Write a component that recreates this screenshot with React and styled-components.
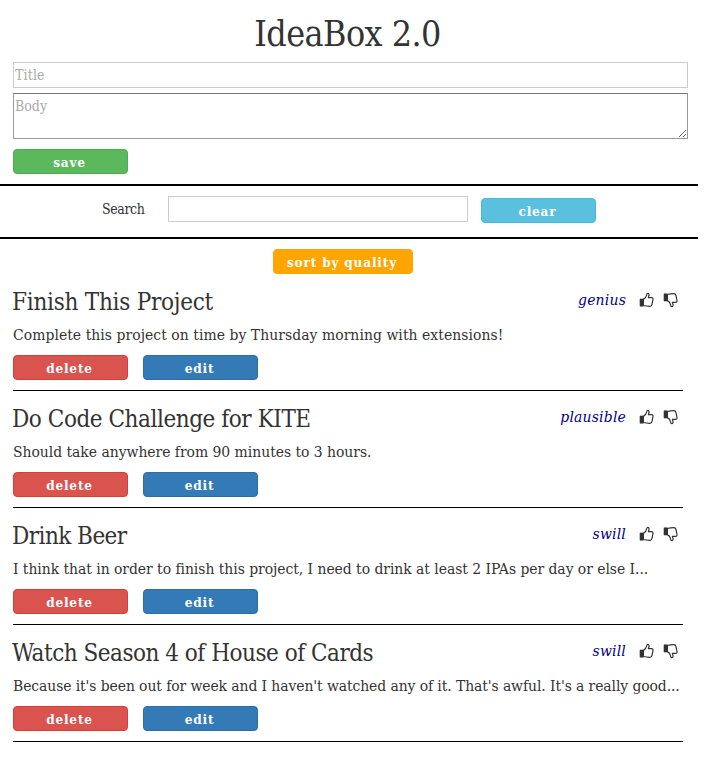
import React from "react";
import styled, { createGlobalStyle } from "styled-components";

const serif = '"DejaVu Serif Condensed", "DejaVu Serif", serif';

const GlobalStyle = createGlobalStyle`
  * { box-sizing: border-box; }
  body { margin: 0; background: #fff; color: #333; font-family: ${serif}; font-stretch: condensed; }
  button, input, textarea { font-family: inherit; font-stretch: inherit; }
`;

const Page = styled.main`width: 698px; height: 761px; overflow: hidden;`;

const Composer = styled.form`
  height: 186px;
  padding: 13px 10px 0 13px;
  border-bottom: 2px solid #000;
  display: flex;
  flex-direction: column;
  align-items: flex-start;
`;

const Heading = styled.h1`
  margin: 0 0 7px;
  width: 100%;
  height: 42px;
  line-height: 42px;
  padding-right: 6px;
  text-align: center;
  font-size: 35.5px;
  font-weight: 400;
  letter-spacing: -0.55px;
  white-space: nowrap;
`;

const TextInput = styled.input`
  width: ${(p) => p.$width}px;
  height: 26px;
  padding: 0 1px;
  border: 1px solid #ccc;
  border-radius: 0;
  font-size: 14px;
  outline: none;
  &::placeholder { color: #a9a9a9; opacity: 1; letter-spacing: 0.15px; }
`;

const BodyInput = styled.textarea`
  display: block;
  width: 675px;
  height: 46px;
  margin: 5px 0 10px;
  padding: 3px 1px;
  border: 1px solid #999;
  border-top-color: #767676;
  border-radius: 0;
  font-size: 14px;
  line-height: 18px;
  outline: none;
  &::placeholder { color: #a9a9a9; opacity: 1; }
`;

const tones = {
  save: ["#5cb85c", "#4cae4c"],
  clear: ["#5bc0de", "#46b8da"],
  sort: ["#ffa500", "#ffa500"],
  remove: ["#d9534f", "#d43f3a"],
  edit: ["#337ab7", "#2e6da4"],
};

const Button = styled.button`
  flex: none;
  width: ${(p) => p.$width || 115}px;
  height: 25px;
  padding: 1px 2px 0 0;
  border: 1px solid ${(p) => tones[p.$tone][1]};
  border-radius: 4px;
  background: ${(p) => tones[p.$tone][0]};
  color: #fff;
  font-size: 13.5px;
  font-weight: 700;
  line-height: 22px;
  letter-spacing: 0.8px;
  white-space: nowrap;
`;

const SearchBar = styled.section`
  height: 53px;
  padding: 10px 0 0 102px;
  border-bottom: 2px solid #000;
  display: flex;
  align-items: flex-start;
`;

const SearchLabel = styled.label`
  width: 66px;
  line-height: 26px;
  font-size: 14px;
  letter-spacing: -0.4px;
`;

const ClearSlot = styled.div`padding: 2px 0 0 13px;`;

const SortRow = styled.div`height: 35px; padding: 10px 0 0 273px;`;

const IdeaList = styled.section`padding-left: 13px; width: 683px;`;

const Idea = styled.article`
  height: 117px;
  padding-top: 13px;
  border-bottom: 1px solid #000;
`;

const IdeaHeader = styled.header`
  display: flex;
  justify-content: space-between;
  align-items: center;
  height: 30px;
`;

const IdeaTitle = styled.h2`
  margin: 0 0 0 -1px;
  font-size: 24px;
  font-weight: 400;
  line-height: 30px;
  letter-spacing: ${(p) => p.$spacing}px;
  white-space: nowrap;
`;

const Rating = styled.div`display: flex; align-items: center; padding: 0 5px 4px 0;`;

const Quality = styled.em`
  margin-right: 13px;
  color: #00008b;
  font-size: 15.5px;
  line-height: 28px;
  letter-spacing: 0.2px;
`;

const IdeaBody = styled.p`
  margin: 7px 0 9px;
  height: 22px;
  line-height: 22px;
  font-size: 15.5px;
  letter-spacing: ${(p) => p.$spacing}px;
  white-space: nowrap;
`;

const Actions = styled.div`display: flex; gap: 15px;`;

const ThumbSvg = styled.svg`
  display: block;
  flex: none;
  width: 15px;
  height: 16px;
  margin-right: ${(p) => (p.$down ? 0 : 9)}px;
  transform: ${(p) => (p.$down ? "scaleY(-1)" : "none")};
`;

function Thumb({ down }) {
  return (
    <ThumbSvg viewBox="0 0 15 16" $down={down} aria-label={down ? "Downvote" : "Upvote"}>
      <path d="M1 7h3.4v7.2H1z" fill="#333" stroke="#333" strokeWidth="0.6" strokeLinejoin="round" />
      <path
        d="M4.4 7.4C6 6.6 7.2 5 7.5 3.4c.2-1.2.5-2.1 1.3-2 1 .1 1.4 1 1.2 2.1-.2.9-.5 1.5-.6 2.2h3.2c1.1 0 1.6.8 1.4 1.7L13 12.3c-.3 1.4-.9 2-2.1 2-2.4 0-4.4-.2-6.5-.8z"
        fill="none"
        stroke="#333"
        strokeWidth="1.2"
        strokeLinejoin="round"
      />
    </ThumbSvg>
  );
}

const ideas = [
  { title: "Finish This Project", quality: "genius", body: "Complete this project on time by Thursday morning with extensions!", ts: -0.25, bs: 0.05 },
  { title: "Do Code Challenge for KITE", quality: "plausible", body: "Should take anywhere from 90 minutes to 3 hours.", ts: -0.45, bs: -0.03 },
  { title: "Drink Beer", quality: "swill", body: "I think that in order to finish this project, I need to drink at least 2 IPAs per day or else I...", ts: -0.55, bs: -0.04 },
  { title: "Watch Season 4 of House of Cards", quality: "swill", body: "Because it's been out for week and I haven't watched any of it. That's awful. It's a really good...", ts: -0.5, bs: -0.09 },
];

export default function App() {
  return (
    <Page>
      <GlobalStyle />
      <Composer>
        <Heading>IdeaBox 2.0</Heading>
        <TextInput $width={675} placeholder="Title" />
        <BodyInput placeholder="Body" />
        <Button type="button" $tone="save">save</Button>
      </Composer>
      <SearchBar>
        <SearchLabel htmlFor="search">Search</SearchLabel>
        <TextInput id="search" $width={300} />
        <ClearSlot><Button $tone="clear">clear</Button></ClearSlot>
      </SearchBar>
      <SortRow><Button $tone="sort" $width={140}>sort by quality</Button></SortRow>
      <IdeaList>
        {ideas.map((idea) => (
          <Idea key={idea.title}>
            <IdeaHeader>
              <IdeaTitle $spacing={idea.ts}>{idea.title}</IdeaTitle>
              <Rating>
                <Quality>{idea.quality}</Quality>
                <Thumb />
                <Thumb down />
              </Rating>
            </IdeaHeader>
            <IdeaBody $spacing={idea.bs}>{idea.body}</IdeaBody>
            <Actions>
              <Button $tone="remove">delete</Button>
              <Button $tone="edit">edit</Button>
            </Actions>
          </Idea>
        ))}
      </IdeaList>
    </Page>
  );
}
